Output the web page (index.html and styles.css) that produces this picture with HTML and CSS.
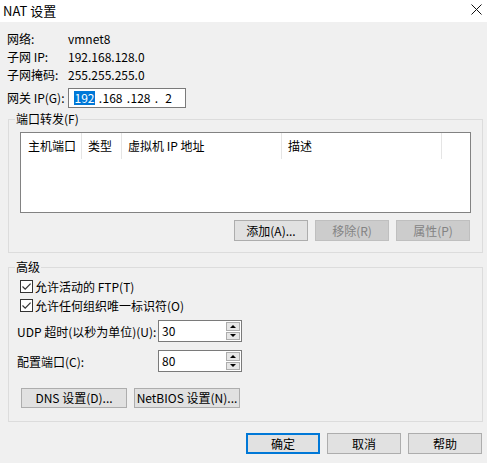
FILE: index.html
```html
<!DOCTYPE html>
<html lang="zh-CN">
<head>
<meta charset="utf-8">
<title>NAT 设置</title>
<link rel="stylesheet" href="styles.css">
</head>
<body>
<div class="titlebar">
  <span class="title">NAT 设置</span>
  <svg class="close" viewBox="0 0 11 11" width="11" height="11"><path d="M0.5 0.5 L10.5 10.5 M10.5 0.5 L0.5 10.5" stroke="#111" stroke-width="1" fill="none"/></svg>
</div>

<div class="info">
  <div class="row first"><span class="lbl">网络:</span><span>vmnet8</span></div>
  <div class="row"><span class="lbl">子网 IP:</span><span>192.168.128.0</span></div>
  <div class="row"><span class="lbl">子网掩码:</span><span>255.255.255.0</span></div>
  <div class="row gw"><span class="lbl">网关 IP(G):</span>
    <div class="ip">
      <span class="oct sel">192</span><span class="dot">.</span>
      <span class="oct">168</span><span class="dot">.</span>
      <span class="oct">128</span><span class="dot">.</span>
      <span class="oct">2</span>
    </div>
  </div>
</div>

<div class="group g1">
  <span class="glabel">端口转发(F)</span>
  <div class="list">
    <div class="lhead">
      <div class="c1">主机端口</div>
      <div class="c2">类型</div>
      <div class="c3">虚拟机 IP 地址</div>
      <div class="c4">描述</div>
    </div>
  </div>
  <div class="btnrow">
    <button class="btn">添加(A)...</button>
    <button class="btn dis">移除(R)</button>
    <button class="btn dis">属性(P)</button>
  </div>
</div>

<div class="group g2">
  <span class="glabel">高级</span>
  <div class="chk"><span class="box"><svg viewBox="0 0 11 11" width="11" height="11"><path d="M1.5 5.5 L4.2 8.2 L9.6 2.6" stroke="#333" stroke-width="1.2" fill="none"/></svg></span><span>允许活动的 FTP(T)</span></div>
  <div class="chk"><span class="box"><svg viewBox="0 0 11 11" width="11" height="11"><path d="M1.5 5.5 L4.2 8.2 L9.6 2.6" stroke="#333" stroke-width="1.2" fill="none"/></svg></span><span>允许任何组织唯一标识符(O)</span></div>
  <div class="spinrow">
    <span class="slbl">UDP 超时(以秒为单位)(U):</span>
    <div class="spin"><span class="val">30</span><span class="arrows"><span class="arr up"></span><span class="arr down"></span></span></div>
  </div>
  <div class="spinrow second">
    <span class="slbl">配置端口(C):</span>
    <div class="spin"><span class="val">80</span><span class="arrows"><span class="arr up"></span><span class="arr down"></span></span></div>
  </div>
  <div class="dnsrow">
    <button class="btn wide">DNS 设置(D)...</button>
    <button class="btn wide">NetBIOS 设置(N)...</button>
  </div>
</div>

<div class="footer">
  <button class="btn def">确定</button>
  <button class="btn">取消</button>
  <button class="btn">帮助</button>
</div>
</body>
</html>
```

FILE: styles.css
```css
* { box-sizing: border-box; }

body {
  margin: 0;
  width: 487px;
  height: 463px;
  overflow: hidden;
  background: #f0f0f0;
  font-family: "Noto Sans CJK SC", "Noto Sans", sans-serif;
  font-size: 12px;
  color: #000;
}

.titlebar {
  height: 22px;
  background: #fff;
  display: flex;
  justify-content: space-between;
  padding: 0 5px 0 3px;
}
.title { font-size: 13px; line-height: 21px; }
.close { display: block; margin-top: 4px; }

.info { padding-left: 7px; }
.row { display: flex; align-items: center; height: 18px; line-height: 18px; }
.row.first { margin-top: 7px; height: 19px; }
.row.gw { margin-top: 4px; height: 20px; }
.lbl { width: 61px; flex: none; }

.ip {
  width: 118px;
  height: 20px;
  border: 1px solid #7a7a7a;
  background: #fff;
  display: flex;
  align-items: center;
  padding-left: 5px;
}
.oct { width: 21px; text-align: center; line-height: 14px; height: 14px; }
.oct.sel { background: #0078d7; color: #fff; }
.dot { width: 7px; text-align: right; line-height: 14px; }

.group {
  position: relative;
  margin-left: 8px;
  width: 475px;
  border: 1px solid #dcdcdc;
}
.glabel {
  position: absolute;
  top: -9px;
  left: 6px;
  padding: 0 1px;
  background: #f0f0f0;
  line-height: 16px;
}

.g1 { margin-top: 11px; height: 134px; padding: 12px 11px 11px 11px; }

.list {
  width: 451px;
  height: 81px;
  border: 1px solid #828282;
  background: #fff;
}
.lhead { display: flex; height: 26px; }
.lhead div { border-right: 1px solid #e5e5e5; padding-left: 6px; line-height: 25px; }
.lhead .c1 { width: 61px; padding-left: 7px; }
.lhead .c2 { width: 40px; }
.lhead .c3 { width: 160px; }
.lhead .c4 { width: 160px; }

.btnrow {
  display: flex;
  justify-content: flex-end;
  gap: 7px;
  margin-top: 7px;
  padding-right: 1px;
}

.btn {
  width: 74px;
  height: 21px;
  border: 1px solid #adadad;
  background: #e1e1e1;
  font: inherit;
  color: #000;
  padding: 0;
  margin: 0;
  display: flex;
  align-items: center;
  justify-content: center;
  line-height: 18px;
}
.btn.dis { background: #cccccc; border-color: #bfbfbf; color: #838383; }
.btn.wide { width: 106px; height: 20px; }
.btn.def { border-color: #0078d7; box-shadow: inset 0 0 0 1px #0078d7; }

.g2 { margin-top: 14px; height: 155px; padding: 9px 10px 13px 8px; }

.chk { display: flex; align-items: center; height: 18px; margin-left: 3px; }
.chk + .chk { margin-top: 1px; }
.box {
  width: 13px;
  height: 13px;
  border: 1px solid #333;
  background: #fff;
  margin-right: 2px;
  display: flex;
}
.box svg { display: block; }

.spinrow { display: flex; align-items: center; height: 22px; margin-top: 6px; }
.spinrow.second { margin-top: 8px; }
.slbl { width: 141px; flex: none; }
.spin {
  width: 84px;
  height: 22px;
  border: 1px solid #7a7a7a;
  background: #fff;
  display: flex;
}
.val { flex: 1; padding-left: 3px; line-height: 19px; }
.arrows {
  width: 15px;
  display: flex;
  flex-direction: column;
  gap: 1px;
  padding: 1px 1px 1px 0;
}
.arr {
  flex: 1;
  background: #e6e6e6;
  border: 1px solid #adadad;
  display: flex;
  align-items: center;
  justify-content: center;
}
.arr::before {
  content: "";
  width: 0;
  height: 0;
  border-left: 3px solid transparent;
  border-right: 3px solid transparent;
}
.arr.up::before { border-bottom: 3px solid #000; }
.arr.down::before { border-top: 3px solid #000; }

.dnsrow { display: flex; gap: 7px; margin-top: 16px; margin-left: 4px; }

.footer {
  display: flex;
  justify-content: flex-end;
  gap: 7px;
  margin-top: 11px;
  padding-right: 5px;
}
```
